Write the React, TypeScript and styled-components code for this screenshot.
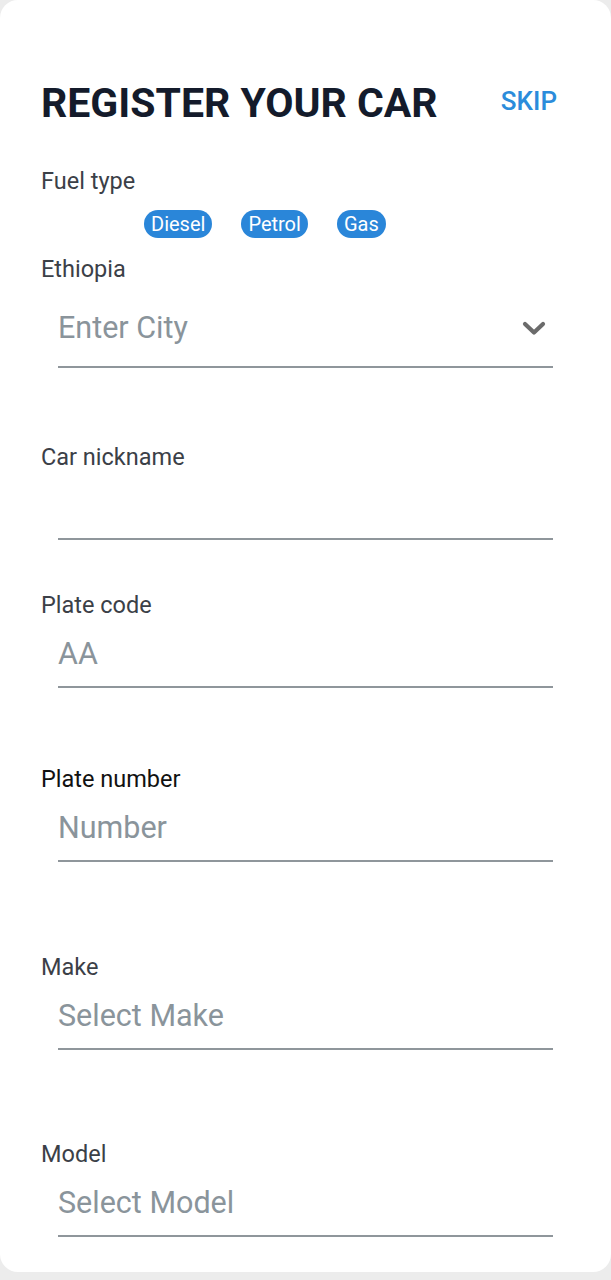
import React from "react";
import styled, { createGlobalStyle } from "styled-components";

const Global = createGlobalStyle`
  html, body { margin: 0; padding: 0; background: #ececec; }
  body { font-family: Roboto, "Noto Sans", "Liberation Sans", sans-serif; }
  * { box-sizing: border-box; }
`;

const Card = styled.div`
  background: #ffffff;
  border-radius: 18px;
  min-height: 1272px;
  padding: 79px 58px 34px 41px;
  display: flex;
  flex-direction: column;
`;

const Header = styled.div`
  display: flex;
  align-items: center;
  justify-content: space-between;
  margin-right: -4px;
`;

const Title = styled.h1`
  margin: 0;
  font-size: 41px;
  line-height: 48px;
  font-weight: 700;
  color: #141b2b;
`;

const Skip = styled.button`
  border: 0;
  background: none;
  padding: 0 0 4px;
  font-family: inherit;
  font-size: 26px;
  font-weight: 500;
  color: #2b8cdb;
  cursor: pointer;
`;

const Label = styled.div<{ $dark?: boolean }>`
  font-size: 23.5px;
  line-height: 28px;
  color: ${(p) => (p.$dark ? "#111111" : "#3b4047")};
`;

const FuelLabel = styled(Label)`
  margin-top: 40px;
`;

const Chips = styled.div`
  display: flex;
  gap: 29px;
  padding-left: 103px;
  margin-top: 15px;
`;

const Chip = styled.span`
  display: inline-flex;
  align-items: center;
  height: 28px;
  padding: 0 7px;
  border-radius: 14px;
  background: #2a86d9;
  color: #ffffff;
  font-size: 20px;
`;

const Field = styled.div<{ $top: number }>`
  margin-top: ${(p) => p.$top}px;
  display: flex;
  flex-direction: column;
`;

const InputRow = styled.div<{ $select?: boolean }>`
  margin-left: 17px;
  margin-top: ${(p) => (p.$select ? 27 : 17)}px;
  padding: 0 7px ${(p) => (p.$select ? 20 : 14)}px 0;
  border-bottom: 2px solid #8f969b;
  display: flex;
  align-items: center;
  justify-content: space-between;
`;

const Placeholder = styled.span`
  font-size: 30.5px;
  line-height: 36px;
  height: 36px;
  color: #8a949b;
`;

const Chevron = () => (
  <svg width="24" height="15" viewBox="0 0 24 15">
    <polyline
      points="3,3 12,11.5 21,3"
      fill="none"
      stroke="#6b6b6b"
      strokeWidth="4.2"
      strokeLinecap="round"
      strokeLinejoin="round"
    />
  </svg>
);

const fields = [
  { label: "Car nickname", placeholder: "", top: 75 },
  { label: "Plate code", placeholder: "AA", top: 51 },
  { label: "Plate number", placeholder: "Number", top: 77, dark: true },
  { label: "Make", placeholder: "Select Make", top: 91 },
  { label: "Model", placeholder: "Select Model", top: 90 },
];

export default function App() {
  return (
    <>
      <Global />
      <Card>
        <Header>
          <Title>REGISTER YOUR CAR</Title>
          <Skip>SKIP</Skip>
        </Header>
        <FuelLabel>Fuel type</FuelLabel>
        <Chips>
          <Chip>Diesel</Chip>
          <Chip>Petrol</Chip>
          <Chip>Gas</Chip>
        </Chips>
        <Field $top={17}>
          <Label>Ethiopia</Label>
          <InputRow $select>
            <Placeholder>Enter City</Placeholder>
            <Chevron />
          </InputRow>
        </Field>
        {fields.map((f) => (
          <Field key={f.label} $top={f.top}>
            <Label $dark={f.dark}>{f.label}</Label>
            <InputRow>
              <Placeholder>{f.placeholder}</Placeholder>
            </InputRow>
          </Field>
        ))}
      </Card>
    </>
  );
}
